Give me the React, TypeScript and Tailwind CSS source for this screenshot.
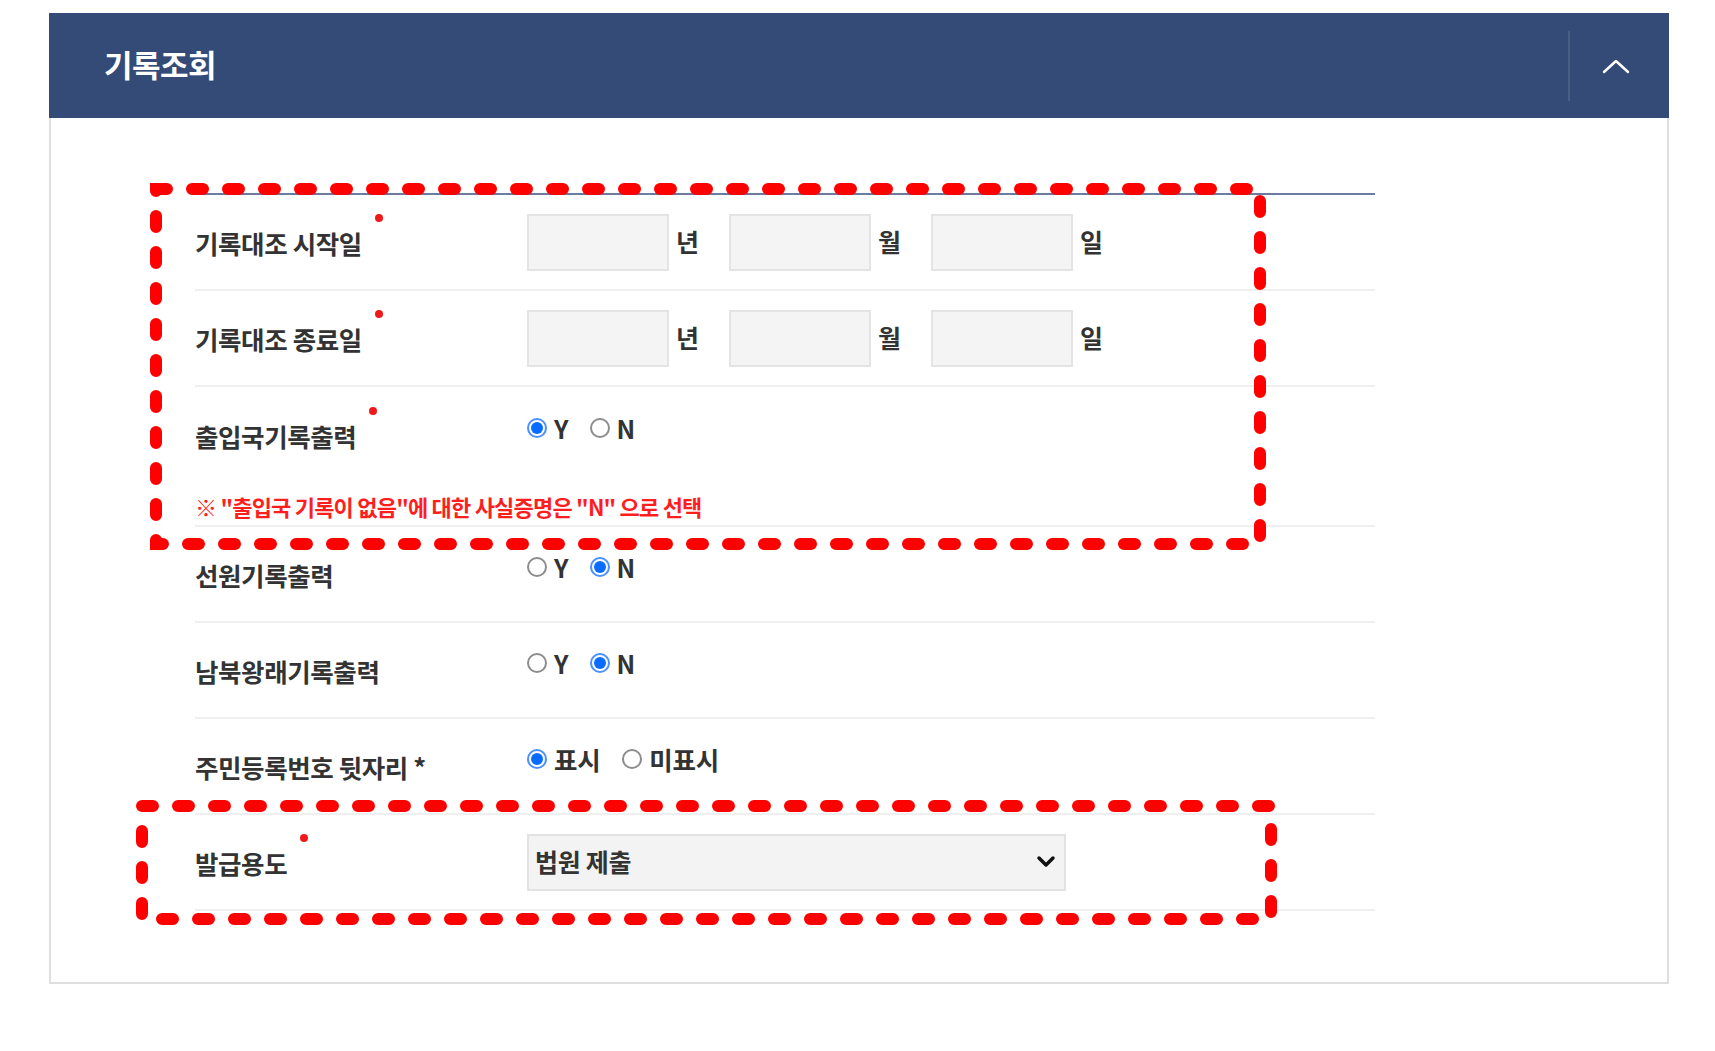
import { ReactNode } from "react";

const font = { fontFamily: '"Noto Sans CJK KR", "Noto Sans", sans-serif' };

function Label({ text, dot }: { text: string; dot?: boolean }) {
  return (
    <div className="w-[332px] shrink-0 self-center mt-[2px]">
      <span className="relative inline-block text-[25.5px] leading-[30px] font-bold tracking-[-0.4px] text-[#333]">
        {text}
        {dot && (
          <span className="absolute left-full ml-[13px] -top-[14px] w-[8px] h-[8px] rounded-full bg-[#f01818]" />
        )}
      </span>
    </div>
  );
}

function DateInputs() {
  return (
    <div className="flex items-center self-center">
      {["년", "월", "일"].map((u) => (
        <div key={u} className="flex items-center">
          <div className="w-[142px] h-[57px] bg-[#f4f4f4] border-2 border-[#e4e4e4]" />
          <span className="ml-[7px] mr-[27px] w-[26px] text-[25px] font-bold text-[#333]">
            {u}
          </span>
        </div>
      ))}
    </div>
  );
}

function Radio({ checked, label, big }: { checked?: boolean; label: string; big?: boolean }) {
  return (
    <div className="flex items-center">
      {checked ? (
        <span className="w-[20px] h-[20px] rounded-full border-2 border-[#4a90ff] flex items-center justify-center">
          <span className="w-[12px] h-[12px] rounded-full bg-[#0a6cff]" />
        </span>
      ) : (
        <span className="w-[20px] h-[20px] rounded-full border-2 border-[#8c8c8c]" />
      )}
      <span
        className={`ml-[7px] leading-[28px] font-bold text-[#333] ${
          big ? "text-[25.5px] tracking-[-0.3px]" : "text-[25px]"
        }`}
      >
        {label}
      </span>
    </div>
  );
}

function Radios({ items, wide }: { items: [string, boolean][]; wide?: boolean }) {
  return (
    <div className={`flex items-center self-center mb-[14px] ${wide ? "gap-[22px]" : "gap-[21px]"}`}>
      {items.map(([l, c]) => (
        <Radio key={l} label={l} checked={c} big={wide} />
      ))}
    </div>
  );
}

function Row({ children }: { children: ReactNode }) {
  return <div className="flex h-[96px] border-b-2 border-[#efefef]">{children}</div>;
}

export default function App() {
  return (
    <div className="relative min-h-screen bg-white pt-[13px] pl-[49px]" style={font}>
      <div className="w-[1620px]">
        {/* header */}
        <div className="h-[105px] bg-[#344b77] flex items-center">
          <h2 className="pl-[55px] mb-[3px] text-[31px] font-bold text-white tracking-[-0.5px] flex-1">
            기록조회
          </h2>
          <div className="w-[2px] h-[70px] bg-[#4a5e86]" />
          <div className="w-[92px] flex justify-center mr-[7px]">
            <svg width="28" height="16" viewBox="0 0 28 16" fill="none">
              <path d="M2 14 L14 3 L26 14" stroke="white" strokeWidth="2.5" strokeLinecap="round" strokeLinejoin="round" />
            </svg>
          </div>
        </div>

        {/* body */}
        <div className="border-x-2 border-b-2 border-[#dedede] pt-[75px] pb-[71px] pl-[144px]">
          <div className="w-[1180px] border-t-2 border-[#6b7ca0]">
            <Row>
              <Label text="기록대조 시작일" dot />
              <DateInputs />
            </Row>
            <Row>
              <Label text="기록대조 종료일" dot />
              <DateInputs />
            </Row>
            <div className="h-[140px] border-b-2 border-[#efefef] flex flex-col">
              <div className="flex h-[96px] shrink-0">
                <Label text="출입국기록출력" dot />
                <Radios items={[["Y", true], ["N", false]]} />
              </div>
              <p className="pt-[9px] text-[22px] leading-[28px] font-bold tracking-[-0.8px] text-[#ff1e1e]">
                ※ "출입국 기록이 없음"에 대한 사실증명은 "N" 으로 선택
              </p>
            </div>
            <Row>
              <Label text="선원기록출력" />
              <Radios items={[["Y", false], ["N", true]]} />
            </Row>
            <Row>
              <Label text="남북왕래기록출력" />
              <Radios items={[["Y", false], ["N", true]]} />
            </Row>
            <Row>
              <Label text="주민등록번호 뒷자리 *" />
              <Radios wide items={[["표시", true], ["미표시", false]]} />
            </Row>
            <Row>
              <Label text="발급용도" dot />
              <div className="self-center w-[539px] h-[57px] bg-[#f3f3f3] border-2 border-[#e2e2e2] flex items-center justify-between pl-[6px] pr-[8px]">
                <span className="text-[25px] font-semibold tracking-[-0.3px] text-[#333]">법원 제출</span>
                <svg width="20" height="14" viewBox="0 0 20 14" fill="none">
                  <path d="M3 3 L10 10 L17 3" stroke="#111" strokeWidth="3.5" strokeLinecap="round" strokeLinejoin="round" />
                </svg>
              </div>
            </Row>
          </div>
        </div>
      </div>

      {/* red dashed annotation boxes */}
      <svg className="absolute left-0 top-0 pointer-events-none" width="1715" height="1051" fill="none">
        <path
          d="M156 189 H1260 V544 H156 Z"
          stroke="#ff0000"
          strokeWidth="12"
          strokeDasharray="11 25"
          strokeLinecap="round"
        />
        <path
          d="M142 806 H1271 V919 H142 Z"
          stroke="#ff0000"
          strokeWidth="12"
          strokeDasharray="11 25"
          strokeLinecap="round"
        />
      </svg>
    </div>
  );
}
